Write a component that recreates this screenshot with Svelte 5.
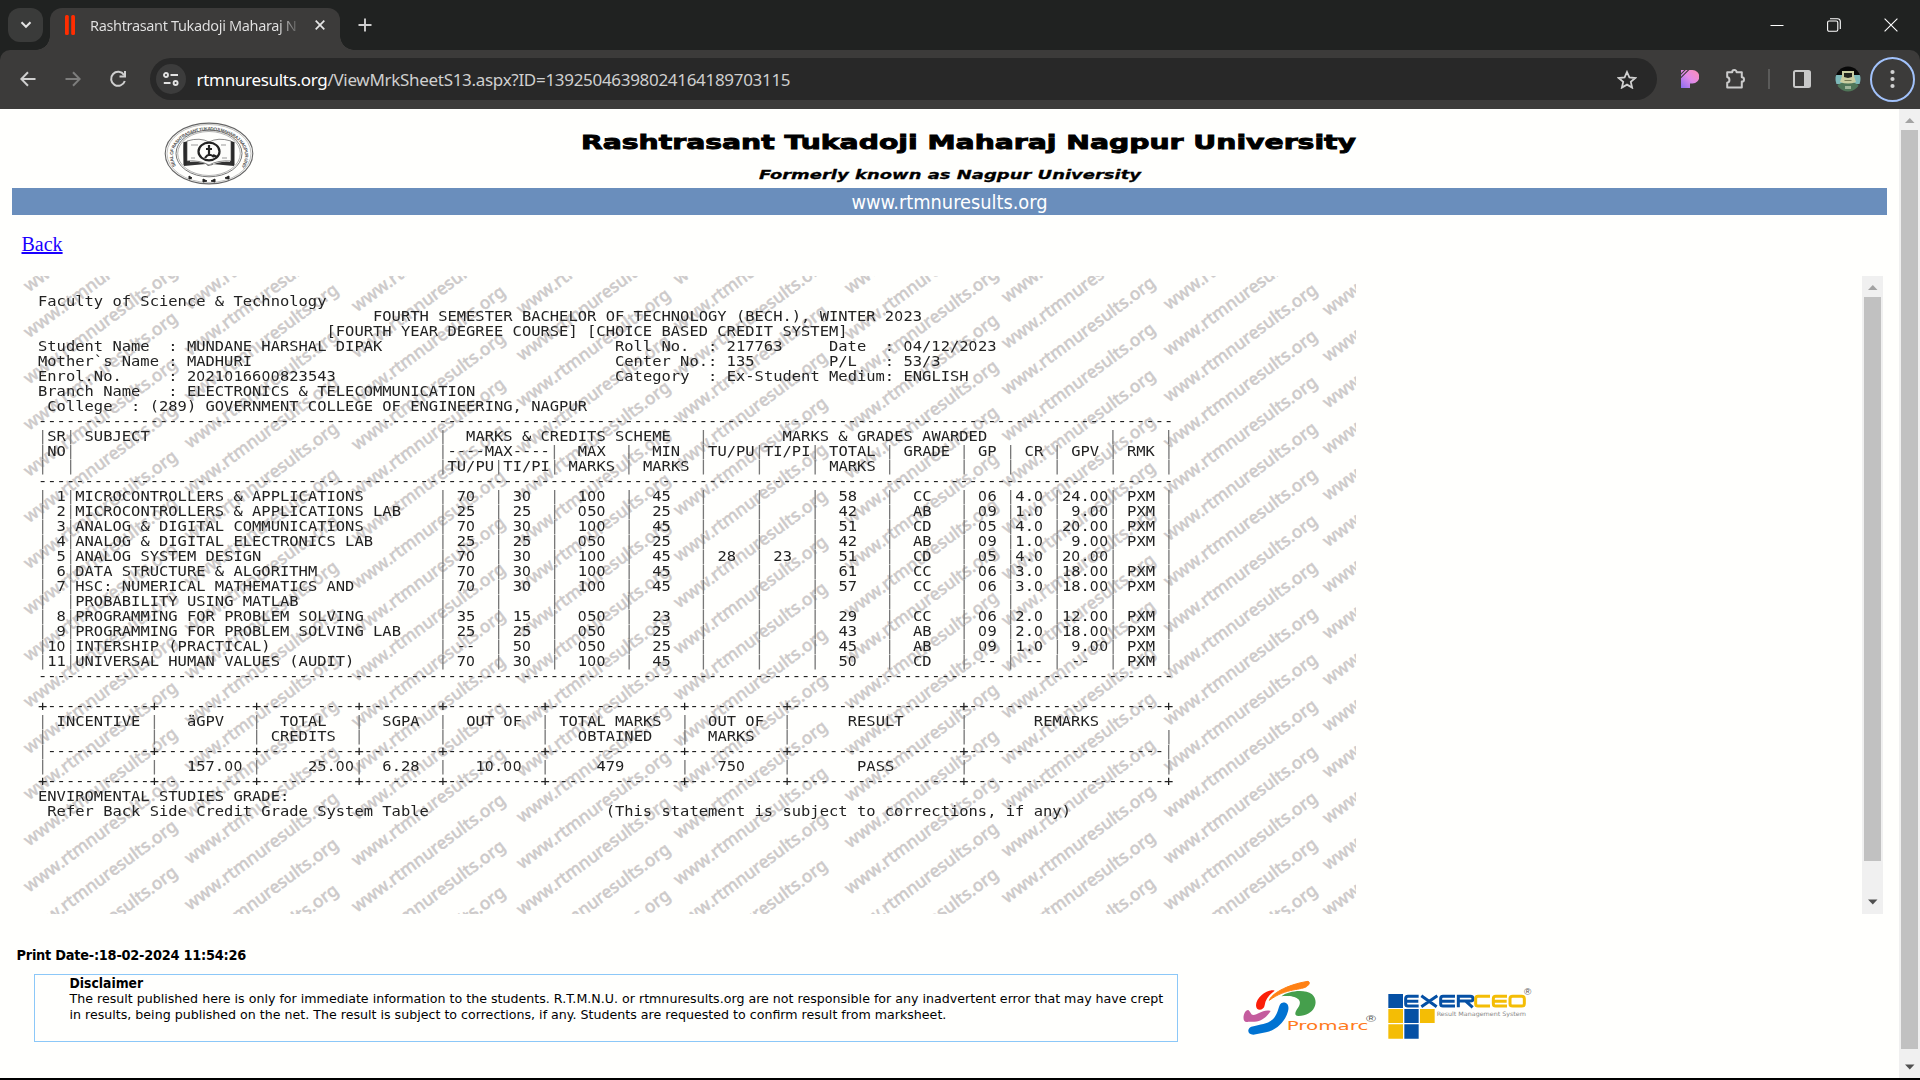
<script>
  // Builds one fixed-pitch line from [column, text] pairs.
  function row(...parts) {
    let out = '';
    for (const [col, text] of [...parts].sort((a, b) => a[0] - b[0])) out = out.padEnd(col) + text;
    return out;
  }
  const bars = (...cols) => cols.map((c) => [c, '|']);
  const MAIN = [0, 3, 43, 49, 55, 63, 71, 77, 83, 91, 99, 104, 109, 115, 121];
  const SUM = [12, 23, 34, 43, 54, 69, 80, 99];
  const rule = '-'.repeat(122);

  function ruled(first, last) {
    const chars = ('-'.repeat(122)).split('');
    SUM.forEach((c) => (chars[c] = '+'));
    chars[0] = first;
    chars[121] = last;
    return chars.join('');
  }

  const subjects = [
    ['1', 'MICROCONTROLLERS & APPLICATIONS', '70', '30', '100', '45', '', '', '58', 'CC', '06', '4.0', '24.00', 'PXM'],
    ['2', 'MICROCONTROLLERS & APPLICATIONS LAB', '25', '25', '050', '25', '', '', '42', 'AB', '09', '1.0', '9.00', 'PXM'],
    ['3', 'ANALOG & DIGITAL COMMUNICATIONS', '70', '30', '100', '45', '', '', '51', 'CD', '05', '4.0', '20.00', 'PXM'],
    ['4', 'ANALOG & DIGITAL ELECTRONICS LAB', '25', '25', '050', '25', '', '', '42', 'AB', '09', '1.0', '9.00', 'PXM'],
    ['5', 'ANALOG SYSTEM DESIGN', '70', '30', '100', '45', '28', '23', '51', 'CD', '05', '4.0', '20.00', ''],
    ['6', 'DATA STRUCTURE & ALGORITHM', '70', '30', '100', '45', '', '', '61', 'CC', '06', '3.0', '18.00', 'PXM'],
    ['7', 'HSC: NUMERICAL MATHEMATICS AND', '70', '30', '100', '45', '', '', '57', 'CC', '06', '3.0', '18.00', 'PXM'],
    ['', 'PROBABILITY USING MATLAB', '', '', '', '', '', '', '', '', '', '', '', ''],
    ['8', 'PROGRAMMING FOR PROBLEM SOLVING', '35', '15', '050', '23', '', '', '29', 'CC', '06', '2.0', '12.00', 'PXM'],
    ['9', 'PROGRAMMING FOR PROBLEM SOLVING LAB', '25', '25', '050', '25', '', '', '43', 'AB', '09', '2.0', '18.00', 'PXM'],
    ['10', 'INTERSHIP (PRACTICAL)', '--', '50', '050', '25', '', '', '45', 'AB', '09', '1.0', '9.00', 'PXM'],
    ['11', 'UNIVERSAL HUMAN VALUES (AUDIT)', '70', '30', '100', '45', '', '', '50', 'CD', '--', '--', '--', 'PXM']
  ];
  const cellCols = [1, 4, 45, 51, 58, 66, 73, 79, 86, 94, 101, 105, 110, 117];

  function subjectRow(s) {
    const cells = s
      .map((text, i) => {
        let col = cellCols[i];
        if (i === 0) col = 3 - text.length;
        if (i === 11 && text === '--') col = 106;
        if (i === 12 && text.length < 5) col = 111;
        return [col, text];
      })
      .filter(([, text]) => text);
    return row(...bars(...MAIN), ...cells);
  }

  const lines = [
    'Faculty of Science & Technology',
    row([36, 'FOURTH SEMESTER BACHELOR OF TECHNOLOGY (BECH.), WINTER 2023']),
    row([31, '[FOURTH YEAR DEGREE COURSE] [CHOICE BASED CREDIT SYSTEM]']),
    row([0, 'Student Name'], [14, ': MUNDANE HARSHAL DIPAK'], [62, 'Roll No.'], [72, ': 217763'], [85, 'Date'], [91, ': 04/12/2023']),
    row([0, 'Mother`s Name'], [14, ': MADHURI'], [62, 'Center No.: 135'], [85, 'P/L'], [91, ': 53/3']),
    row([0, 'Enrol.No.'], [14, ': 2021016600823543'], [62, 'Category'], [72, ': Ex-Student'], [85, 'Medium: ENGLISH']),
    row([0, 'Branch Name'], [14, ': ELECTRONICS & TELECOMMUNICATION']),
    row([1, 'College'], [10, ': (289) GOVERNMENT COLLEGE OF ENGINEERING, NAGPUR']),
    rule,
    row(...bars(0, 3, 43, 71, 115, 121), [1, 'SR'], [5, 'SUBJECT'], [46, 'MARKS & CREDITS SCHEME'], [80, 'MARKS & GRADES AWARDED']),
    row(...bars(0, 3, 43, 55, 63, 71, 77, 83, 91, 99, 104, 109, 115, 121), [1, 'NO'], [44, '----MAX----'], [58, 'MAX'], [66, 'MIN'], [72, 'TU/PU'], [78, 'TI/PI'], [85, 'TOTAL'], [93, 'GRADE'], [101, 'GP'], [106, 'CR'], [111, 'GPV'], [117, 'RMK']),
    row(...bars(...MAIN), [44, 'TU/PU'], [50, 'TI/PI'], [57, 'MARKS'], [65, 'MARKS'], [85, 'MARKS']),
    rule,
    ...subjects.map(subjectRow),
    rule,
    '',
    ruled('+', '+'),
    row(...bars(0, ...SUM), [2, 'INCENTIVE'], [16, 'äGPV'], [26, 'TOTAL'], [37, 'SGPA'], [46, 'OUT OF'], [56, 'TOTAL MARKS'], [72, 'OUT OF'], [87, 'RESULT'], [107, 'REMARKS']),
    row(...bars(0, ...SUM, 121), [25, 'CREDITS'], [58, 'OBTAINED'], [72, 'MARKS']),
    ruled('|', '|'),
    row(...bars(0, ...SUM, 121), [16, '157.00'], [29, '25.00'], [37, '6.28'], [47, '10.00'], [60, '479'], [73, '750'], [88, 'PASS']),
    ruled('+', '+'),
    'ENVIROMENTAL STUDIES GRADE:',
    row([1, 'Refer Back Side Credit Grade System Table'], [61, '(This statement is subject to corrections, if any)'])
  ];

  // Watermark columns: left edge and lowest baseline, relative to the sheet.
  const columns = [[12, 617], [173, 635], [340, 637], [505, 640], [662, 610], [833, 619], [990, 628], [1152, 635], [1311, 641]];
  const marks = columns.flatMap(([x, y]) => Array.from({ length: 17 }, (_, i) => [x, y + 92.4 - i * 46.2]));
</script>

{#snippet scroller(kind)}
  <div class="scroller {kind}">
    <svg class="arrow" width="21" height="21" viewBox="0 0 21 21"><path d="M6 14h9.5L10.8 9z" fill="#a3a3a3" /></svg>
    <div class="thumb"></div>
    <svg class="arrow" width="21" height="21" viewBox="0 0 21 21"><path d="M6 7.5h9.5L10.8 12.5z" fill="#505050" /></svg>
  </div>
{/snippet}

<div class="window">
  <div class="tabs">
    <div class="search">
      <svg width="12" height="8" viewBox="0 0 12 8"><path d="M1.5 1.2 6 5.8l4.500-4.600" fill="none" stroke="#e4e4e4" stroke-width="2" /></svg>
    </div>
    <div class="tab">
      <svg class="fav" width="10" height="20" viewBox="0 0 10 20"><rect width="3.800" height="20" rx="1.500" fill="#ff2d00" /><rect x="6.200" width="3.800" height="20" rx="1.500" fill="#ff2d00" /></svg>
      <span class="title">Rashtrasant Tukadoji Maharaj N</span>
      <svg width="10" height="10" viewBox="0 0 10 10"><path d="M.7.7l8.600 8.600M9.300.7.7 9.300" stroke="#e6e6e6" stroke-width="1.700" /></svg>
    </div>
    <svg class="plus" width="14" height="14" viewBox="0 0 14 14"><path d="M7 .5v13M.5 7h13" stroke="#cfcfcf" stroke-width="1.900" /></svg>
    <div class="controls">
      <svg width="14" height="14" viewBox="0 0 14 14"><path d="M.5 7.500h13" stroke="#fff" /></svg>
      <svg width="14" height="14" viewBox="0 0 14 14"><rect x=".6" y="3" width="10.200" height="10.200" rx="1.500" fill="none" stroke="#fff" stroke-width="1.100" /><path d="M3 .7h7.500a2.800 2.800 0 0 1 2.800 2.800V11" fill="none" stroke="#fff" stroke-width="1.100" /></svg>
      <svg width="14" height="14" viewBox="0 0 14 14"><path d="M.6.6l12.800 12.800M13.400.6.6 13.400" stroke="#fff" stroke-width="1.100" /></svg>
    </div>
  </div>

  <div class="corners"><div class="toolbar">
    <div class="cell"><svg width="16" height="16" viewBox="0 0 16 16"><path d="M15.500 8H1.800M8 1.200 1.300 8 8 14.800" fill="none" stroke="#cfcfcf" stroke-width="2" /></svg></div>
    <div class="cell"><svg width="16" height="16" viewBox="0 0 16 16"><path d="M.5 8h13.700M8 1.200 14.700 8 8 14.800" fill="none" stroke="#7d7d7c" stroke-width="2" /></svg></div>
    <div class="cell"><svg width="18" height="18" viewBox="0 0 18 18"><path d="M15 5A7 7 0 1 0 15.800 11M16 1v5.600h-5.500" fill="none" stroke="#cfcfcf" stroke-width="2" /></svg></div>
    <div class="omnibox">
      <span class="site"><svg width="16" height="14" viewBox="0 0 16 14"><g fill="none" stroke="#e2e2e2" stroke-width="1.900"><circle cx="3" cy="3" r="2" /><path d="M7.500 3H15M.8 11h6.700" /><circle cx="12.600" cy="11" r="2" /></g></svg></span>
      <span class="url"><b>rtmnuresults.org</b>/ViewMrkSheetS13.aspx?ID=13925046398024164189703115</span>
      <svg class="star" width="20" height="19" viewBox="0 0 20 19"><path d="M10 2l2.400 5.400 5.900.6-4.500 3.900 1.300 5.700L10 14.600l-5.100 3 1.300-5.700L1.700 8l5.900-.6z" fill="none" stroke="#d0d0d0" stroke-width="1.800" /></svg>
    </div>
    <div class="cell ext">
      <svg width="18" height="18" viewBox="0 0 18 18">
        <defs><linearGradient id="pg" x1="1" y1="0" x2="0" y2="1"><stop offset="0" stop-color="#ff8fb0" /><stop offset=".5" stop-color="#e28be8" /><stop offset="1" stop-color="#8a6cf0" /></linearGradient></defs>
        <path d="M0 0h11.500a6.500 6.500 0 0 1 0 13.500H9V18H0z" fill="url(#pg)" /><path d="M-1 5 5-1M-1 8.500 8.500-1" stroke="#3c3b3a" stroke-width="1.100" />
      </svg>
    </div>
    <div class="cell wide"><svg width="22" height="22" viewBox="0 0 22 22"><path d="M2.200 4.200h5a2.200 2.200 0 0 1 4.400 0h5.200v5a2.200 2.200 0 0 1 0 4.400v6H2.200v-4.800a3 3 0 0 0 0-5.800z" fill="none" stroke="#cbcbcb" stroke-width="2" stroke-linejoin="round" /></svg></div>
    <i class="divider"></i>
    <div class="cell wide"><svg width="18" height="18" viewBox="0 0 18 18"><rect x="1" y="1" width="16" height="16" rx="1.500" fill="none" stroke="#c8c8c8" stroke-width="2" /><path d="M11 1h6v16h-6z" fill="#c8c8c8" /></svg></div>
    <div class="cell">
      <svg width="26" height="26" viewBox="0 0 26 26">
        <defs><clipPath id="av"><circle cx="13" cy="13" r="12.500" /></clipPath></defs>
        <g clip-path="url(#av)"><path d="M0 0h26v9H0z" fill="#080808" /><path d="M0 9h26v9H0z" fill="#7db9b9" /><path d="M2 26v-6q3-4 11-4t11 4v6z" fill="#4f7558" /><path d="M7 5h12v5l2 6q-8 3-16 0l2-6z" fill="#c9cda0" /><path d="M9 7h8v4l-4 1-4-1z" fill="#22251f" /><path d="M9.500 14.500h7" stroke="#777b55" /><path d="M10 20h6v3h-6z" fill="#9fb59a" /></g>
      </svg>
    </div>
    <div class="cell menu"><svg width="5" height="20" viewBox="0 0 5 20"><g fill="#d2d2d2"><circle cx="2.500" cy="3" r="2.100" /><circle cx="2.500" cy="10" r="2.100" /><circle cx="2.500" cy="17" r="2.100" /></g></svg></div>
  </div></div>

  <div class="viewport">
    <div class="page">
      <header>
        <svg class="seal" width="90" height="63" viewBox="0 0 90 63">
          <defs><path id="ring" d="M12 44A36 25.500 0 1 1 78 44" /></defs>
          <g fill="none" stroke="#666"><ellipse cx="45" cy="31.500" rx="43.800" ry="30.400" stroke-width="1.100" /><ellipse cx="45" cy="31.500" rx="42" ry="29" stroke-width=".4" /><ellipse cx="45" cy="31.500" rx="33" ry="23.300" stroke-width=".9" /><ellipse cx="45" cy="31.500" rx="31.300" ry="22" stroke-width=".5" /></g>
          <text font-size="4.600" fill="#555" font-weight="bold"><textPath href="#ring" textLength="134">SEAL OF RASHTRASANT TUKADOJI MAHARAJ NAGPUR UNIVERSITY</textPath></text>
          <path d="M20 20q-1 1 0 24l22-2q3 4 6 0l22 2V20l-3-1-1 21q-11-1-20 4-9-5-20-4l-1-21z" fill="#333" />
          <path d="M23 19q13-4 22 1 9-5 22-1v20q-13-1-22 4-9-5-22-4z" fill="#fdfdfb" stroke="#555" stroke-width=".7" />
          <path d="M21 20v23M69 20v23" stroke="#2a2a2a" stroke-width="3" />
          <ellipse cx="45" cy="29.500" rx="10.500" ry="8.800" fill="none" stroke="#222" stroke-width="2.200" />
          <path d="M42 27h6M45 23v11M41 36q4-6 9-1M49 33l4 2" stroke="#222" stroke-width="2.200" fill="none" />
          <path d="M27 23h7M57 23h5M27 36h4M58 36h5" stroke="#999" />
          <path d="M25 54l3 2-3 1zM39 57l4 2-4 1zM51 57l-4 2 4 1zM65 54l-4 2 4 1z" fill="#222" stroke="#222" />
        </svg>
        <svg class="names" width="790" height="79" viewBox="0 0 790 79">
          <text class="uni" x="6" y="39.500" textLength="775" lengthAdjust="spacingAndGlyphs">Rashtrasant Tukadoji Maharaj Nagpur University</text>
          <text class="former" x="184" y="70" textLength="382" lengthAdjust="spacingAndGlyphs">Formerly known as Nagpur University</text>
        </svg>
      </header>
      <div class="banner">www.rtmnuresults.org</div>
      <a class="back" href="#back">Back</a>

      <div class="result">
        <div class="sheet">
          <svg class="watermark" width="1339" height="638" viewBox="0 0 1339 638" aria-hidden="true">
            {#each marks as [x, y]}
              <text transform="translate({x} {y}) rotate(-36.5)" textLength="186" lengthAdjust="spacingAndGlyphs">www.rtmnuresults.org</text>
            {/each}
          </svg>
          <pre>{#each lines as line}<span class="line">{#each line.split(/(0+|\|)/).filter(Boolean) as part}{#if part[0] === '0'}<span class="zero">{part}</span>{:else if part === '|'}<span class="bar">|</span>{:else}{part}{/if}{/each}</span>{/each}</pre>
        </div>
        {@render scroller('inner')}
      </div>

      <p class="printed">Print Date-:18-02-2024 11:54:26</p>
      <footer>
        <div class="disclaimer">
          <h2>Disclaimer</h2>
          <p>The result published here is only for immediate information to the students. R.T.M.N.U. or rtmnuresults.org are not responsible for any inadvertent error that may have crept</p>
          <p>in results, being published on the net. The result is subject to corrections, if any. Students are requested to confirm result from marksheet.</p>
        </div>
        <svg class="logos" width="400" height="100" viewBox="0 0 1200 300">
          <path d="M268 121C272 104 318 74 384 64q9 4-2 14C366 92 320 82 268 121z" fill="#ff8114" stroke="#ff8114" stroke-width="3" />
          <path d="M284 92c-20-7-56 20-56 44 0 20 24 16 26 0 2-18 14-32 30-44z" fill="#fb1f08" />
          <path d="M304 109c20-16 70-23 92-6 24 22 7 65-40 65-18-2-8-16 0-28 16-26-20-36-52-31z" fill="#459f4c" />
          <path d="M205 150c-14-2-24 42 0 35 40 4 54-14 67-32-24-6-38 12-52 12-8 0-8-10-15-15z" fill="#c45c9d" />
          <path d="M308 128c16-2 20 12 16 26-8 30-34 56-66 63l-38 7c-18 0-20-18-6-24 40-10 64-8 78-44 6-16 6-26 16-28z" fill="#0073d2" />
          <text class="promarc" x="320" y="210" textLength="245" lengthAdjust="spacingAndGlyphs">Promarc</text>
          <text class="reg" x="558" y="185" textLength="30" lengthAdjust="spacingAndGlyphs">®</text>
          <g fill="#0550a4"><path d="M625 102h44v42h-44zM673 147h43v42h-43zM673 193h43v43h-43z" /></g>
          <g fill="#f4bd05"><path d="M625 147h44v42h-44zM720 147h44v42h-44zM625 193h44v43h-44z" /></g>
          <g fill="none" stroke-width="9">
            <path stroke="#0550a4" d="M716 109h-32q-7 0-7 7v15q0 7 7 7h32M677 123.500h38M724 107l46 33M772 107l-48 33M825 109h-36q-7 0-7 7v15q0 7 7 7h36M782 123.500h42M835 142v-33h36q8 0 8 7t-8 7h-32M858 124l20 18" />
            <path stroke="#f4bd05" d="M930 109h-36q-7 0-7 7v15q0 7 7 7h36M981 109h-34q-7 0-7 7v15q0 7 7 7h34M940 123.500h40M998 109h27q8 0 8 7v15q0 7-8 7h-27q-8 0-8-7v-15q0-7 8-7z" />
          </g>
          <text class="rms" x="770" y="168" textLength="268" lengthAdjust="spacingAndGlyphs">Result Management System</text>
          <text class="reg" x="1032" y="105" textLength="22" lengthAdjust="spacingAndGlyphs">®</text>
        </svg>
      </footer>
    </div>
    {@render scroller('outer')}
  </div>
</div>

<style>
  :global(body) { margin: 0; background: #000; overflow: hidden; }
  .window { width: 1920px; height: 1080px; display: flex; flex-direction: column; font-family: 'Noto Sans', sans-serif; background: #000; }
  svg { display: block; flex: none; }

  .tabs { height: 50px; background: #202221; display: flex; align-items: center; padding-left: 8px; box-sizing: border-box; flex: none; }
  .search { width: 35px; height: 34px; border-radius: 12px; background: #3a3b3a; display: flex; align-items: center; justify-content: center; }
  .tab { position: relative; align-self: flex-end; margin-left: 7px; width: 290px; height: 42px; padding: 0 15px 8px; box-sizing: border-box; background: #3c3b3a; border-radius: 12px 12px 0 0; display: flex; align-items: center; }
  .tab::before, .tab::after { content: ''; position: absolute; bottom: 0; width: 14px; height: 14px; }
  .tab::before { left: -14px; background: radial-gradient(circle at 0 0, transparent 13.5px, #3c3b3a 14px); }
  .tab::after { right: -14px; background: radial-gradient(circle at 100% 0, transparent 13.5px, #3c3b3a 14px); }
  .fav { margin-right: 15px; }
  .title { width: 211px; margin-right: 14px; overflow: hidden; white-space: nowrap; font-size: 14.5px; line-height: 24px; letter-spacing: -.35px; color: transparent; background: linear-gradient(90deg, #e3e3e3 188px, #3c3b3a 212px); background-clip: text; }
  .plus { margin-left: 18px; }
  .controls { margin-left: auto; display: flex; gap: 43px; padding-right: 22px; }

  .corners { background: #202221; flex: none; }
  .toolbar { height: 59px; background: #3c3b3a; border-radius: 10px 10px 0 0; display: flex; align-items: center; padding: 0 0 1px 5px; box-sizing: border-box; }
  .cell { width: 45px; height: 45px; flex: none; display: flex; align-items: center; justify-content: center; box-sizing: border-box; }
  .ext { margin-left: 10px; width: 46px; }
  .wide { width: 46px; }
  .divider { width: 2px; height: 20px; margin: 0 9px; background: #5b5b5a; }
  .menu { border: 2px solid #a2c2fb; border-radius: 50%; }
  .omnibox { width: 1507px; height: 42px; margin-left: 10px; border-radius: 21px; background: #282828; display: flex; align-items: center; padding: 0 20px 0 6px; box-sizing: border-box; }
  .site { width: 30px; height: 30px; border-radius: 50%; background: #3c3c3c; display: flex; align-items: center; justify-content: center; margin-right: 10.5px; }
  .url { font-size: 17px; color: #cfcfcf; letter-spacing: -.305px; white-space: nowrap; }
  .url b { font-weight: normal; color: #fff; }
  .star { margin-left: auto; }

  .viewport { height: 969px; display: flex; background: #fffffd; }
  .page { width: 1899px; padding: 0 12px; box-sizing: border-box; display: flex; flex-direction: column; }
  header { height: 79px; display: flex; align-items: flex-start; flex: none; }
  .seal { margin: 13px 0 0 152px; font-family: 'Liberation Sans', sans-serif; }
  .names { margin-left: 321px; }
  .uni { font: bold 20px 'DejaVu Sans', sans-serif; stroke: #000; stroke-width: .9px; }
  .former { font: italic bold 13px 'DejaVu Sans', sans-serif; stroke: #000; stroke-width: .3px; }
  .banner { width: 1875px; height: 27px; background: #6a8ebc; color: #fff; text-align: center; font: 19.800px/29px 'DejaVu Sans Condensed', 'DejaVu Sans', sans-serif; flex: none; }
  .back { align-self: flex-start; margin: 18px 0 0 9.500px; font: 20px/23px 'Liberation Serif', serif; color: #1b00ff; text-decoration: underline; }
  .result { display: flex; justify-content: space-between; height: 638px; margin: 20px 4px 0 5px; flex: none; }
  .sheet { width: 1339px; display: grid; }
  .watermark, pre { grid-area: 1 / 1; }
  .watermark { overflow: hidden; }
  .watermark text { font: 500 17.500px 'Noto Sans', sans-serif; fill: #cdcaca; stroke: #cdcaca; stroke-width: .4px; }
  pre { justify-self: start; margin: 18px 0 0 20.500px; font: 13.800px/15px 'DejaVu Sans Mono', monospace; color: #222; transform: scaleX(1.1203); transform-origin: 0 0; }
  .line { display: block; height: 15px; white-space: pre; }
  .zero { font-family: 'DejaVu Sans Condensed', sans-serif; letter-spacing: .405px; line-height: 0; }
  .bar { color: #777; }

  .scroller { width: 21px; background: #f0f0f0; display: flex; flex-direction: column; }
  .thumb { flex: none; width: 17px; margin: 0 2px; background: #c1c1c1; }
  .inner .thumb { height: 564px; }
  .outer .thumb { height: 919px; }
  .scroller .arrow:last-child { margin-top: auto; }
  .inner .arrow:last-child { margin-bottom: 1px; }

  .printed { margin: 32px 0 0 4.500px; font: bold 14.400px/19px 'DejaVu Sans Condensed', 'DejaVu Sans', sans-serif; letter-spacing: -.24px; color: #000; }
  footer { display: flex; margin: 8.500px 0 0 22px; align-items: flex-start; }
  .disclaimer { width: 1144px; height: 68px; border: 1px solid #8cc8f8; box-sizing: border-box; padding: 0 0 0 34.500px; color: #000; font: 12.640px/16px 'DejaVu Sans', sans-serif; white-space: nowrap; }
  .disclaimer h2 { margin: 0; font-family: 'DejaVu Sans Condensed', sans-serif; font-size: 13.800px; line-height: 16px; }
  .disclaimer p { margin: 0; }
  .logos { margin: -14px 0 0 2px; }
  .promarc { font: 38px 'DejaVu Sans', sans-serif; fill: #ff7a1c; }
  .reg { font: 27px 'Liberation Sans', sans-serif; fill: #555; }
  .rms { font: 18px 'DejaVu Sans', sans-serif; fill: #888; }
</style>
